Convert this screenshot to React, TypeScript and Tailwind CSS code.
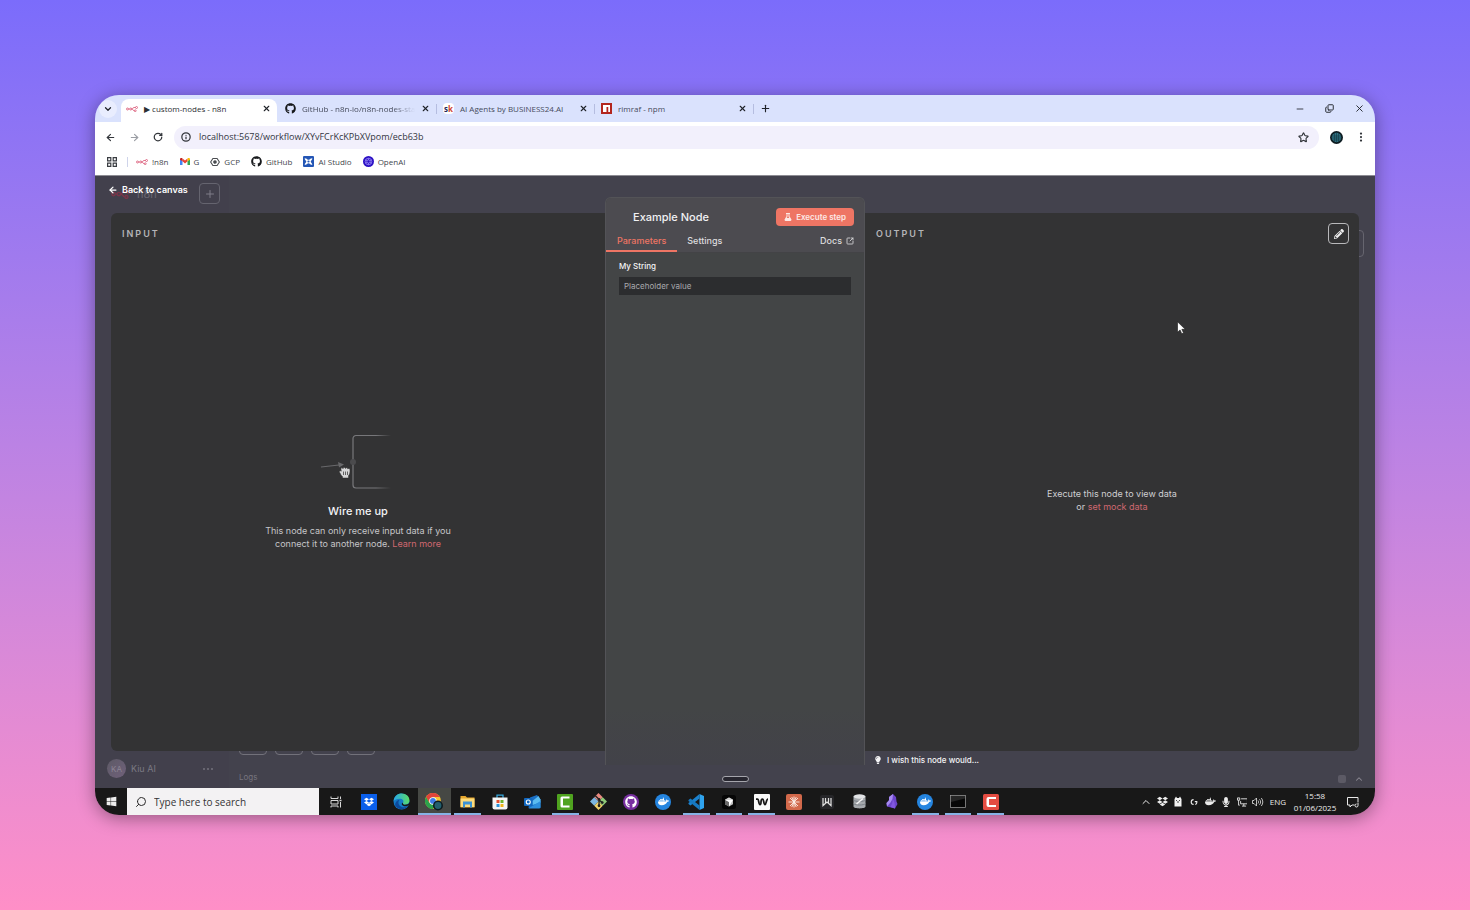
import type { ReactNode } from "react";
import { FaDocker, FaDropbox, FaFlask, FaGithub, FaLightbulb, FaMicrophone, FaPencilAlt, FaWindows } from "react-icons/fa";
import {
  ArrowLeft,
  ArrowRight,
  ChevronDown,
  ChevronUp,
  Copy,
  EllipsisVertical,
  Info,
  Minus,
  Plus,
  RotateCw,
  Search,
  Star,
  X,
  SquareArrowOutUpRight,
} from "lucide-react";

const SYSTEM_FONT = "font-['Open_Sans','Noto_Sans',sans-serif]";

function N8nMark({ className }: { className: string }) {
  return (
    <svg viewBox="0 0 24 12" className={className} fill="none" stroke="currentColor" strokeWidth="1.7">
      <circle cx="3" cy="6" r="2" />
      <circle cx="9.5" cy="6" r="2" />
      <circle cx="21" cy="3" r="2" />
      <circle cx="18.5" cy="9.5" r="1.8" />
      <path d="M5 6h2.5M11.5 6c3 0 1.500-3 4.500-3H19M11.500 6c3 0 2 3.500 5 3.500" />
    </svg>
  );
}

function GmailIcon() {
  return (
    <svg viewBox="0 0 24 18" className="w-[10px]">
      <path d="M0 2v14a2 2 0 0 0 2 2h4V7z" fill="#4285f4" />
      <path d="M24 2v14a2 2 0 0 1-2 2h-4V7z" fill="#34a853" />
      <path d="M6 1v7l6 5 6-5V1l-6 5z" fill="#ea4335" />
      <path d="M0 2.500C0 0 3-1 5 .5L6 1v7L0 4z" fill="#c5221f" />
      <path d="M24 2.500C24 0 21-1 19 .5L18 1v7l6-4z" fill="#fbbc04" />
    </svg>
  );
}

function GcpIcon() {
  return (
    <svg viewBox="0 0 24 24" className="w-[10px]" fill="none" stroke="#4a4d51" strokeWidth="2.600">
      <path d="M7 3.500h10L22.500 12 17 20.500H7L1.500 12z" />
      <circle cx="12" cy="12" r="3" fill="#4a4d51" />
    </svg>
  );
}

function AiStudioIcon() {
  return (
    <svg viewBox="0 0 20 20" className="w-[11px]">
      <rect width="20" height="20" rx="2" fill="#2456b5" />
      <path d="M3 4c4 0 5 3 7 3s3-3 7-3c0 4-3 4-3 6s3 3 3 6c-4 0-5-3-7-3s-3 3-7 3c0-3 3-4 3-6S3 8 3 4z" fill="#fff" />
      <circle cx="10" cy="10" r="2" fill="#2456b5" />
    </svg>
  );
}

function OpenAiIcon() {
  return (
    <svg viewBox="0 0 20 20" className="w-[11px]">
      <circle cx="10" cy="10" r="10" fill="#2b10c4" />
      <g fill="none" stroke="#a99cff" strokeWidth="1.200">
        <circle cx="10" cy="10" r="6" />
        <circle cx="10" cy="10" r="3" />
        <path d="M10 4v3M10 13v3M4.800 7l2.600 1.500M12.600 11.500l2.600 1.500M4.800 13l2.600-1.500M12.600 8.500L15.200 7" />
      </g>
    </svg>
  );
}

function NpmIcon() {
  return (
    <svg viewBox="0 0 22 22" className="w-[11px] shrink-0">
      <rect width="22" height="22" fill="#b3261e" />
      <path d="M4 4h14v14h-3.500V8H11v10H4z" fill="#fff" />
    </svg>
  );
}

function SkIcon() {
  return (
    <span className="flex size-[11px] shrink-0 items-center justify-center rounded-sm bg-white text-[8px] font-bold leading-none text-[#20285a]">
      s<span className="text-[#d0432f]">k</span>
    </span>
  );
}

function Globe({ className }: { className: string }) {
  return (
    <svg viewBox="0 0 26 26" className={className}>
      <circle cx="13" cy="13" r="13" fill="#0d1b20" />
      <circle cx="13" cy="13" r="9.500" fill="#2d6f80" />
      <path d="M4 10h18M4 14h18M6 18h14M9 4v18M13 3v20M17 4v18" stroke="#123640" strokeWidth="1.200" />
    </svg>
  );
}

type Tab = { title: string; icon: ReactNode; active?: boolean; width: string; fade?: boolean };

const tabs: Tab[] = [
  { title: "▶ custom-nodes - n8n", icon: <N8nMark className="w-3 shrink-0 text-[#dc5a78]" />, active: true, width: "w-[156px] pl-[5px] pr-[6px]" },
  { title: "GitHub - n8n-io/n8n-nodes-sta", icon: <FaGithub className="size-[11px] shrink-0 text-[#17191c]" />, width: "w-[160px] px-2", fade: true },
  { title: "AI Agents by BUSINESS24.AI", icon: <SkIcon />, width: "w-[158px] pl-1.5 pr-2" },
  { title: "rimraf - npm", icon: <NpmIcon />, width: "w-[159px] pl-1.5 pr-2" },
];

function TabStrip() {
  return (
    <div className="flex h-[27px] items-stretch bg-[#dae2fd] text-[#202329]">
      <button aria-label="Search tabs" className="mx-1 flex size-[18px] items-center justify-center self-center rounded-full bg-[#e9edfe]">
        <ChevronDown className="size-2.5" strokeWidth={3} />
      </button>
      {tabs.map((tab) => (
        <div
          key={tab.title}
          className={`flex min-w-0 items-center gap-1.5 ${tab.width} ${
            tab.active ? "mt-1 rounded-t-lg bg-white pb-1" : ""
          }`}
        >
          {tab.icon}
          <a
            href="#tab"
            className={`min-w-0 flex-1 whitespace-nowrap text-[8px] leading-3 ${
              tab.active ? "text-[#2c2e33]" : "text-[#464b5c]"
            } ${tab.fade ? "[mask-image:linear-gradient(to_right,black_80%,transparent)]" : ""}`}
          >
            {tab.title}
          </a>
          <button aria-label={`Close ${tab.title}`} className="shrink-0">
            <X className="size-[9px]" strokeWidth={3} />
          </button>
          {!tab.active && <span className="-mr-2 h-2.5 w-px shrink-0 bg-[#b5bde0]" />}
        </div>
      ))}
      <button aria-label="New tab" className="ml-1.5 self-center">
        <Plus className="size-[11px]" strokeWidth={2.5} />
      </button>
      <div className="ml-auto flex items-center gap-5 pr-2.5">
        <button aria-label="Minimize"><Minus className="size-2.5" /></button>
        <button aria-label="Restore"><Copy className="size-[9px] -scale-x-100 rotate-180" strokeWidth={2.5} /></button>
        <button aria-label="Close window"><X className="size-[11px]" /></button>
      </div>
    </div>
  );
}

function Toolbar() {
  return (
    <div className="flex h-[30px] items-center bg-white pl-[3px] pr-2 text-[#33363b]">
      <button aria-label="Back" className="flex w-6 justify-center"><ArrowLeft className="size-[11px]" strokeWidth={2.5} /></button>
      <button aria-label="Forward" className="flex w-6 justify-center text-[#9b9ea4]"><ArrowRight className="size-[11px]" strokeWidth={2.5} /></button>
      <button aria-label="Reload" className="flex w-6 justify-center"><RotateCw className="size-2.5" strokeWidth={3} /></button>
      <div className="ml-1 flex h-[23px] flex-1 items-center rounded-full bg-[#f2f0fc] pl-[7px] pr-2.5">
        <Info className="size-2.5 shrink-0" strokeWidth={3} />
        <input aria-label="Address" defaultValue="localhost:5678/workflow/XYvFCrKcKPbXVpom/ecb63b" className="ml-2 min-w-0 flex-1 bg-transparent text-[9px] text-[#33363f] outline-none" />
        <button aria-label="Bookmark this page"><Star className="size-[11px]" strokeWidth={2.5} /></button>
      </div>
      <button aria-label="Profile" className="ml-[11px]"><Globe className="size-[13px]" /></button>
      <button aria-label="Browser menu" className="ml-3"><EllipsisVertical className="size-3" strokeWidth={2.5} /></button>
    </div>
  );
}

function Bookmarks() {
  const items = [
    { label: "!n8n", icon: <N8nMark className="w-3 text-[#dc5a78]" /> },
    { label: "G", icon: <GmailIcon /> },
    { label: "GCP", icon: <GcpIcon /> },
    { label: "GitHub", icon: <FaGithub className="size-[11px] text-[#17191c]" /> },
    { label: "AI Studio", icon: <AiStudioIcon /> },
    { label: "OpenAI", icon: <OpenAiIcon /> },
  ];
  return (
    <nav className="flex h-6 items-center border-b border-[#8d8c93] bg-white pb-1 pl-3 text-[8px] text-[#44474d]">
      <button aria-label="Apps">
        <svg viewBox="0 0 10 10" className="size-2.5" fill="none" stroke="#3a3d42" strokeWidth="1.200">
          <path d="M.6.6h3.200v3.200H.6zM6.200.6h3.200v3.200H6.200zM.6 6.200h3.200v3.200H.6zM6.200 6.200h3.200v3.200H6.200z" />
        </svg>
      </button>
      <span className="ml-2.5 mr-2 h-2.5 w-px bg-[#cfd4ea]" />
      <div className="flex items-center gap-[11px]">
        {items.map((item) => (
          <a key={item.label} href="#bookmark" className="flex items-center gap-1">
            {item.icon}
            {item.label}
          </a>
        ))}
      </div>
    </nav>
  );
}

function CanvasBehind() {
  return (
    <div aria-hidden="true" className="absolute inset-0 flex bg-[#43424d]">
      <div className="flex w-[134px] flex-col justify-between bg-[#42404c]">
        <div className="flex items-center gap-1.5 pl-4 pt-2.5 text-[11px] leading-4 text-[#6b6974]">
          <N8nMark className="w-5 text-[#7a3448]" />
          <span>n8n</span>
        </div>
        <div className="flex items-center gap-[5px] px-3 pb-2.5 text-[9px] text-[#7b7983]">
          <span className="flex size-[19px] items-center justify-center rounded-full bg-linear-to-br from-[#5d5a66] to-[#70607a] text-[8px] text-[#8c8594]">KA</span>
          <span>Kiu AI</span>
          <span className="ml-auto mr-1 flex gap-0.5">
            <i className="size-0.5 rounded-full bg-[#74727c]" />
            <i className="size-0.5 rounded-full bg-[#74727c]" />
            <i className="size-0.5 rounded-full bg-[#74727c]" />
          </span>
        </div>
      </div>
      <div className="flex flex-1 flex-col pl-2.5 pr-[11px]">
        <div className="mt-[54px] h-[27px] w-7 self-end rounded-sm border border-[#66656f]" />
        <div className="mt-auto flex gap-2">
          {[0, 1, 2, 3].map((tile) => (
            <span key={tile} className="size-7 rounded-sm border border-[#72717a]" />
          ))}
        </div>
        <div className="flex h-[33px] items-end justify-between pb-1 text-[8px] leading-[13px] text-[#77757f]">
          <span>Logs</span>
          <span className="flex items-center gap-2">
            <i className="size-2 rounded-xs bg-[#5c5a65]" />
            <ChevronUp className="size-2.5 text-[#8b8993]" strokeWidth={2.5} />
          </span>
        </div>
      </div>
    </div>
  );
}

function WireDrawing() {
  return (
    <svg viewBox="0 0 76 56" className="h-14 w-[76px]" fill="none">
      <defs>
        <linearGradient id="wire-fade" gradientUnits="userSpaceOnUse" x1="33" y1="0" x2="71" y2="0">
          <stop offset="0.600" stopColor="#77777a" />
          <stop offset="1" stopColor="#77777a" stopOpacity="0" />
        </linearGradient>
      </defs>
      <path d="M71 1.500H36a3 3 0 0 0-3 3V51a3 3 0 0 0 3 3h35" stroke="url(#wire-fade)" strokeWidth="1.200" />
      <circle cx="33" cy="28" r="3" fill="#4b4b4d" />
      <path d="M1 33l18-2" stroke="#69696b" strokeWidth="1.200" />
      <path d="M18 28l6 2.500-5 3z" fill="#69696b" />
      <path
        d="M20 39c-1.500-1.600-.2-3 1.300-1.800l-.4-2.200c0-1.600 1.700-1.800 2.100-.3.200-1.700 2.300-1.700 2.500-.1.400-1.300 2.200-1.200 2.300.3.700-1 2.300-.5 2.200 1 0 3-.2 4-1.500 5.800V44h-6v-1.500C21 41.500 20.700 40.200 20 39z"
        fill="#d8d8d8"
        stroke="#2d2d2d"
        strokeWidth=".5"
      />
      <path d="M23.500 37.500v3.500M25.500 37.500v3.500M27.500 37.500v3.500" stroke="#444" strokeWidth=".8" />
    </svg>
  );
}

function InputPanel() {
  return (
    <section className="flex min-w-0 flex-1 flex-col rounded-l-md bg-[#333334]">
      <h2 className="px-[11px] pt-[15px] text-[9px] font-semibold leading-3 tracking-[2px] text-[#b5b5b8]">INPUT</h2>
      <div className="flex flex-1 flex-col items-center justify-center text-center">
        <WireDrawing />
        <h3 className="mt-3.5 text-[11px] font-medium leading-[14px] text-[#f2f2f4]">Wire me up</h3>
        <p className="mb-2 mt-1.5 text-[9px] leading-[13px] text-[#c6c6c9]">
          This node can only receive input data if you
          <br />
          connect it to another node.{" "}
          <a href="#learn" className="text-[#cf6870]">Learn more</a>
        </p>
      </div>
    </section>
  );
}

function NodePanel() {
  return (
    <section className="z-10 -mb-3.5 -mt-4 w-[260px] shrink-0 overflow-hidden rounded-t-md border-x border-t border-[#535357] bg-linear-to-b from-[#434546] from-90% to-[#424249]">
      <header className="h-[55px] border-b border-[#434346] bg-[#4c4b50]">
        <div className="flex items-center justify-between pb-[3px] pl-[27px] pr-2.5 pt-2.5">
          <h1 className="text-[11px] font-medium leading-4 text-[#f1f1f3]">Example Node</h1>
          <button className="flex h-[18px] items-center gap-1 rounded-sm bg-[#ee7564] px-2 text-[8px] font-semibold text-[#fde9e6]">
            <FaFlask className="size-2" />
            Execute step
          </button>
        </div>
        <div className="flex h-[23px] items-stretch pr-2.5 text-[9px] font-medium text-[#dcdcde]">
          <button className="border-b-2 border-[#ee7564] px-[11px] pt-0.5 text-[#ee7564]">Parameters</button>
          <button className="px-2.5">Settings</button>
          <a href="#docs" className="ml-auto flex items-center gap-1">
            Docs
            <SquareArrowOutUpRight className="size-2" strokeWidth={2.5} />
          </a>
        </div>
      </header>
      <div className="flex flex-col gap-1 px-[13px] pt-[7px]">
        <label htmlFor="my-string" className="text-[8px] font-medium leading-[13px] text-[#f4f4f5]">My String</label>
        <input id="my-string" placeholder="Placeholder value" className="h-[18px] w-full bg-[#2c2d2f] px-[5px] text-[8px] text-[#c4c4c7] outline-none placeholder:text-[#a9a9ad]" />
      </div>
    </section>
  );
}

function OutputPanel() {
  return (
    <section className="relative flex min-w-0 flex-1 flex-col rounded-r-md bg-[#333334]">
      <div className="flex items-start justify-between pl-[11px] pr-2.5 pt-2.5">
        <h2 className="pt-[5px] text-[9px] font-semibold leading-3 tracking-[2px] text-[#b5b5b8]">OUTPUT</h2>
        <button aria-label="Edit output" className="flex size-[21px] items-center justify-center rounded-sm border border-[#b9b9bb] text-[#f0f0f0]">
          <FaPencilAlt className="size-2.5" />
        </button>
      </div>
      <div className="flex flex-1 items-center justify-center pt-1 text-center text-[9px] leading-[13px] text-[#cfcfd2]">
        <p>
          Execute this node to view data
          <br />
          or <a href="#mock" className="text-[#cf6870]">set mock data</a>
        </p>
      </div>
      <svg viewBox="0 0 12 18" className="absolute left-[63%] top-[20%] h-[14px] w-[10px]">
        <path d="M1.500 1v13.500l3.300-3 2.200 5 2.300-1-2.200-4.800h4.400z" fill="#fff" stroke="#1c1c1c" strokeWidth=".8" />
      </svg>
    </section>
  );
}

function Workspace() {
  return (
    <main className="relative flex flex-1 flex-col font-['Inter',sans-serif]">
      <CanvasBehind />
      <div className="relative flex flex-1 flex-col">
        <div className="flex h-[37px] shrink-0 items-start">
          <a href="#canvas" className="flex w-[94px] items-center gap-1 whitespace-nowrap pl-[13px] pt-1.5 text-[9px] font-semibold leading-4 text-white">
            <ArrowLeft className="size-2.5" strokeWidth={3} />
            Back to canvas
          </a>
          <button aria-label="Add" className="ml-2.5 mt-[7px] flex size-[21px] items-center justify-center rounded-sm border border-[#65646f] text-[#7f7d88]">
            <Plus className="size-3" />
          </button>
        </div>
        <div className="flex min-h-80 flex-1 px-4">
          <InputPanel />
          <NodePanel />
          <OutputPanel />
        </div>
        <footer className="grid h-[37px] shrink-0 grid-cols-[1fr_260px_1fr] px-4">
          <span />
          <button aria-label="Resize panel" className="mt-[25px] h-1.5 w-[27px] justify-self-center rounded-full border border-[#a5a5ac] bg-[#27262f]" />
          <a href="#wish" className="flex items-center gap-[5px] self-start pl-[9px] pt-0.5 text-[8px] font-medium leading-[14px] text-[#f4f4f6]">
            <FaLightbulb className="size-2" />
            I wish this node would...
          </a>
        </footer>
      </div>
    </main>
  );
}

function DockerDisc() {
  return (
    <span className="flex size-4 items-center justify-center rounded-full bg-[#2585e0] text-white">
      <FaDocker className="size-[11px]" />
    </span>
  );
}

type TaskApp = { name: string; open?: boolean; active?: boolean; icon: ReactNode };

const apps: TaskApp[] = [
  {
    name: "Task view",
    icon: (
      <svg viewBox="0 0 24 24" className="size-3" fill="none" stroke="#d8d8d8" strokeWidth="2">
        <path d="M2 1v4h14V1M2 9h14v7H2zM2 23v-3h14v3M21 1v5M21 12v11" />
        <path d="M19 9h4" strokeWidth="3" />
      </svg>
    ),
  },
  { name: "Dropbox", icon: <span className="flex size-4 items-center justify-center bg-[#0b5fea] text-white"><FaDropbox className="size-2.5" /></span> },
  {
    name: "Edge",
    icon: (
      <svg viewBox="0 0 32 32" className="size-[17px]">
        <defs>
          <linearGradient id="edge-top" x1="0" x2="1"><stop stopColor="#27a8e8" /><stop offset="1" stopColor="#5bdc67" /></linearGradient>
        </defs>
        <circle cx="16" cy="16" r="15" fill="#147ac8" />
        <path d="M1 15C2 6 9 1 16 1c9 0 15 6 15 13 0 5-4 8-9 8-3 0-4-2-3-4 2-3-1-7-6-7-6 0-10 3-12 4z" fill="url(#edge-top)" />
        <path d="M12 13c-4 5-1 14 8 14 4 0 7-2 9-4-5 10-18 10-24 2-3-5 2-12 7-12z" fill="#0c4a9c" />
        <path d="M19 18c-1 2 0 4 3 4 4 0 7-1 10-4v4c-2 1-4 2-7 3-8 1-11-5-6-7z" fill="#181818" />
      </svg>
    ),
  },
  {
    name: "Chrome",
    open: true,
    active: true,
    icon: (
      <svg viewBox="0 0 34 34" className="size-[18px]">
        <circle cx="15" cy="15" r="15" fill="#f6c431" />
        <path d="M2 7.500A15 15 0 0 1 28 7.500H15L8.500 19z" fill="#e0443a" />
        <path d="M2 7.500A15 15 0 0 0 15 30l6.500-11.300H8.500z" fill="#2ba24c" />
        <circle cx="15" cy="15" r="7" fill="#fff" />
        <circle cx="15" cy="15" r="5.500" fill="#3d7de8" />
        <circle cx="24.500" cy="23.500" r="9.500" fill="#0d1b20" />
        <circle cx="24.500" cy="23.500" r="6.500" fill="#23606f" />
      </svg>
    ),
  },
  {
    name: "File Explorer",
    open: true,
    icon: (
      <svg viewBox="0 0 30 26" className="w-[15px]">
        <path d="M1 2h10l3 3h15v20H1z" fill="#e5a62d" />
        <path d="M1 7h28v17H1z" fill="#fcdb7b" />
        <path d="M6 13h18v12h-4v-6h-10v6H6z" fill="#3b92d4" />
      </svg>
    ),
  },
  {
    name: "Store",
    icon: (
      <svg viewBox="0 0 32 32" className="size-4">
        <path d="M10 8V2h12v6" fill="none" stroke="#35a6dc" strokeWidth="2.500" />
        <path d="M1 7h30v20a4 4 0 0 1-4 4H5a4 4 0 0 1-4-4z" fill="#f6f6f6" />
        <path d="M9 12h6v6H9z" fill="#e8502f" />
        <path d="M17 12h6v6h-6z" fill="#6fb42c" />
        <path d="M9 20h6v6H9z" fill="#2b94dc" />
        <path d="M17 20h6v6h-6z" fill="#f2b51d" />
      </svg>
    ),
  },
  {
    name: "Outlook",
    icon: (
      <svg viewBox="0 0 34 28" className="w-[17px]">
        <path d="M12 5l14-5 7 9v17H9z" fill="#1b6fc4" />
        <path d="M17 12L29 2l4 7v6l-16 5z" fill="#5bbcf0" />
        <path d="M9 27l24-15v12a3 3 0 0 1-3 3z" fill="#2c8fdc" />
        <rect x="0" y="6" width="17" height="16" rx="2" fill="#1268c0" />
        <circle cx="8.500" cy="14" r="4" fill="none" stroke="#fff" strokeWidth="2.200" />
      </svg>
    ),
  },
  {
    name: "Camtasia",
    open: true,
    icon: (
      <svg viewBox="0 0 32 32" className="size-4">
        <rect width="32" height="32" rx="2" fill="#4fa31f" />
        <path d="M25 5H10a3 3 0 0 0-3 3v16a3 3 0 0 0 3 3h15v-4H12V9h13z" fill="#fff" />
      </svg>
    ),
  },
  {
    name: "Git",
    icon: (
      <svg viewBox="0 0 32 32" className="size-[17px]">
        <path d="M16 0l8 8-8 8-8-8z" fill="#e98a80" />
        <path d="M8 8l8 8-8 8-8-8z" fill="#7cb6e0" />
        <path d="M24 8l8 8-8 8-8-8z" fill="#8fcb7a" />
        <path d="M16 16l8 8-8 8-8-8z" fill="#f1d36b" />
        <path d="M10 5l7 7v13M17 13l6 5" stroke="#202020" strokeWidth="2.500" fill="none" />
        <circle cx="17" cy="12" r="2.600" fill="#202020" />
        <circle cx="17" cy="24" r="2.600" fill="#202020" />
        <circle cx="23" cy="18" r="2.600" fill="#202020" />
      </svg>
    ),
  },
  { name: "GitHub Desktop", icon: <span className="flex size-4 items-center justify-center rounded-full bg-[#782fa0]"><FaGithub className="size-3 text-white" /></span> },
  { name: "Docker Desktop", icon: <DockerDisc /> },
  {
    name: "VS Code",
    open: true,
    icon: (
      <svg viewBox="0 0 32 32" className="size-4">
        <path d="M23 0l9 4v24l-9 4z" fill="#2fa3ee" />
        <path d="M23 0v9L5 23l-4-3v-2z" fill="#1b82cf" />
        <path d="M23 32v-9L5 9l-4 3v2z" fill="#1679c2" />
      </svg>
    ),
  },
  {
    name: "Cursor",
    open: true,
    icon: (
      <svg viewBox="0 0 28 28" className="size-[14px]">
        <rect width="28" height="28" rx="5" fill="#060606" />
        <path d="M14 5l8 4.500v9L14 23l-8-4.500v-9z" fill="#bdbdbd" />
        <path d="M6 9.500L14 14v9l-8-4.500z" fill="#6b6b6b" />
        <path d="M6 9.500h16L14 23v-9z" fill="#fff" />
        <path d="M14 5l8 4.500H6z" fill="#d6d6d6" />
      </svg>
    ),
  },
  {
    name: "Windsurf",
    open: true,
    icon: (
      <svg viewBox="0 0 32 32" className="size-4">
        <rect width="32" height="32" rx="2" fill="#fafafa" />
        <path d="M4 10h3c3 0 2 11 5 11 2 0 2-2 2-5s1-6 3-6c3 0 2 11 5 11s2-11 6-11" fill="none" stroke="#151515" strokeWidth="3.500" />
      </svg>
    ),
  },
  {
    name: "Claude",
    icon: (
      <svg viewBox="0 0 32 32" className="size-4">
        <rect width="32" height="32" rx="4" fill="#d2694b" />
        <path d="M16 5v22M5 16h22M8 8l16 16M24 8L8 24M11.500 6l9 20M20.500 6l-9 20" stroke="#fbeee8" strokeWidth="1.800" />
      </svg>
    ),
  },
  {
    name: "Writer",
    icon: (
      <svg viewBox="0 0 28 28" className="size-[14px]">
        <rect width="28" height="28" rx="4" fill="#262629" />
        <path d="M6 6v15l8-7 8 7V6M11 6v10M17 6v10" fill="none" stroke="#dedede" strokeWidth="2.500" />
      </svg>
    ),
  },
  {
    name: "Database",
    icon: (
      <svg viewBox="0 0 26 30" className="h-[15px]">
        <path d="M1 5v20c0 5 24 5 24 0V5z" fill="#a5a9ad" />
        <ellipse cx="13" cy="5" rx="12" ry="4.500" fill="#e2e4e6" />
        <path d="M1 12c3 4 21 4 24 0M1 19c3 4 21 4 24 0" fill="none" stroke="#7a8087" strokeWidth="2" />
        <path d="M7 20L20 9" stroke="#f4f4f4" strokeWidth="3" />
      </svg>
    ),
  },
  {
    name: "Obsidian",
    icon: (
      <svg viewBox="0 0 24 30" className="h-[15px]">
        <path d="M14 0l6 6 1 9 2 5-5 9-8-2-8-2-1-7 5-6V6z" fill="#6d45cc" />
        <path d="M14 0L6 6v7l-5 5 1 7 7-8 4-7z" fill="#a78bf1" />
        <path d="M13 10c4 4 5 10 5 19l-9-3c2-5 5-9 4-16z" fill="#8158e0" />
      </svg>
    ),
  },
  { name: "Docker", open: true, icon: <DockerDisc /> },
  {
    name: "Terminal",
    open: true,
    icon: (
      <svg viewBox="0 0 32 26" className="w-4">
        <rect x="1" y="1" width="30" height="24" fill="#070707" stroke="#9b9b9b" strokeWidth="1.500" />
        <path d="M2 2h28v5L2 14z" fill="#262626" />
      </svg>
    ),
  },
  {
    name: "Recorder",
    open: true,
    icon: (
      <svg viewBox="0 0 32 32" className="size-4">
        <rect width="32" height="32" rx="3" fill="#e44c42" />
        <path d="M26 6H11a4 4 0 0 0-4 4v12a4 4 0 0 0 4 4h15v-4H12V10h14z" fill="#fff" />
      </svg>
    ),
  },
];

const tray: { name: string; icon: ReactNode }[] = [
  { name: "Hidden icons", icon: <ChevronUp className="size-3" /> },
  { name: "Dropbox status", icon: <FaDropbox className="size-[11px]" /> },
  {
    name: "Assistant",
    icon: (
      <svg viewBox="0 0 16 22" className="h-[11px]">
        <path d="M1 6l3-5 2 3h4l2-3 3 5v15H1z" fill="#f2f2f2" />
        <path d="M4 9h2M10 9h2M6 12h4" stroke="#222" strokeWidth="1.600" />
      </svg>
    ),
  },
  {
    name: "Logitech",
    icon: (
      <svg viewBox="0 0 20 20" className="size-2" fill="none" stroke="#eee" strokeWidth="2.800">
        <path d="M9 4a6 6 0 1 0 0 12M12 9h5v3c0 3-1 4-4 4" />
      </svg>
    ),
  },
  { name: "Docker status", icon: <FaDocker className="size-[11px]" /> },
  { name: "Microphone", icon: <FaMicrophone className="size-2.5" /> },
  {
    name: "Network",
    icon: (
      <svg viewBox="0 0 24 22" className="h-2.5" fill="none" stroke="#e8e8e8" strokeWidth="2">
        <path d="M9 4h14v11H8V9M15 15v5M11 20h9M1 2v5h5V2zM3.500 7v11H6" />
      </svg>
    ),
  },
  {
    name: "Volume",
    icon: (
      <svg viewBox="0 0 24 20" className="h-2.5" fill="none" stroke="#e8e8e8" strokeWidth="1.600">
        <path d="M1 7h3l5-5v16l-5-5H1zM12 7c1.500 2 1.500 4 0 6M15 4.500c3 3.500 3 7.500 0 11M18.500 2c4 5 4 11 0 16" />
      </svg>
    ),
  },
];

function Taskbar() {
  return (
    <footer className="flex h-[27px] shrink-0 items-stretch bg-[#181818] text-[#ececec]">
      <button aria-label="Start" className="flex w-8 items-center justify-center"><FaWindows className="size-[11px]" /></button>
      <label className="flex w-48 items-center gap-[7px] bg-[#f3f2f3] px-2 text-[#2a2a2a]">
        <Search className="size-3 shrink-0 -scale-x-100" />
        <input aria-label="Search Windows" placeholder="Type here to search" className="w-full min-w-0 bg-transparent pt-px text-[10px] outline-none placeholder:text-[#333]" />
      </label>
      <div className="grid w-[688px] grid-cols-21 pl-px">
        {apps.map((app) => (
          <button
            key={app.name}
            aria-label={app.name}
            className={`relative flex items-center justify-center ${app.active ? "bg-[#464844]" : ""}`}
          >
            {app.icon}
            {app.open && <span className={`absolute bottom-0 h-0.5 bg-[#86b3e6] ${app.active ? "inset-x-0" : "inset-x-[3px]"}`} />}
          </button>
        ))}
      </div>
      <div className="ml-auto flex items-center pr-[9px] text-[8px]">
        {tray.map((item) => (
          <button key={item.name} aria-label={item.name} className="flex w-4 items-center justify-center">{item.icon}</button>
        ))}
        <button className="w-6">ENG</button>
        <time className="w-[50px] text-center leading-3">
          15:58
          <br />
          01/06/2025
        </time>
        <button aria-label="Notifications" className="flex w-[26px] justify-center">
          <svg viewBox="0 0 24 24" className="size-3" fill="none" stroke="#e8e8e8" strokeWidth="2">
            <path d="M22 12V3H1v15h5v4l4-4h5M22 13v6a3 3 0 1 1-3-3" />
          </svg>
        </button>
      </div>
    </footer>
  );
}

export default function App() {
  return (
    <div className="flex min-h-screen bg-linear-to-b from-[#7b6cfb] to-[#ff8fc7] p-[95px]">
      <div className={`flex min-w-0 flex-1 flex-col overflow-hidden rounded-3xl shadow-[0_3px_18px_rgba(0,0,0,0.38)] ${SYSTEM_FONT}`}>
        <TabStrip />
        <Toolbar />
        <Bookmarks />
        <Workspace />
        <Taskbar />
      </div>
    </div>
  );
}
